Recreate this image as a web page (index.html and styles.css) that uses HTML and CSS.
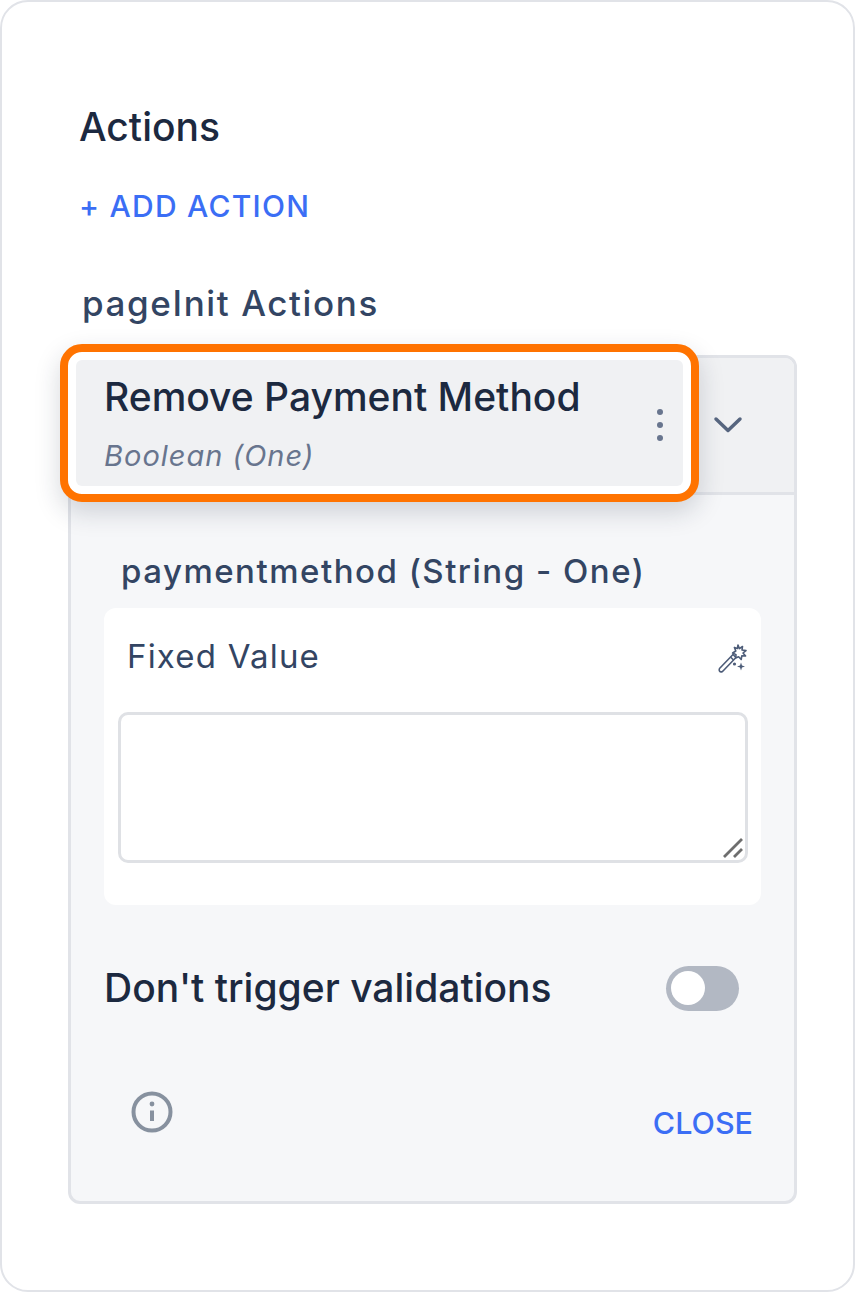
FILE: index.html
```html
<!doctype html>
<html lang="en">

<head>
    <meta charset="utf-8">
    <meta name="viewport" content="width=device-width, initial-scale=1.0">
    <title>Actions</title>
    <link rel="stylesheet" href="styles.css">
</head>

<body>
    <div class="frame">
        <h1 class="title">Actions</h1>
        <a class="add-action">+ ADD ACTION</a>
        <h2 class="subtitle">pageInit Actions</h2>

        <div class="panel">
            <div class="panel-head">
                <div class="highlight">
                    <div class="action-card">
                        <div class="action-text">
                            <div class="action-name">Remove Payment Method</div>
                            <div class="action-type">Boolean (One)</div>
                        </div>
                        <svg class="dots" width="8" height="36" viewBox="0 0 8 36">
                            <circle cx="4" cy="5" r="3" />
                            <circle cx="4" cy="18" r="3" />
                            <circle cx="4" cy="31" r="3" />
                        </svg>
                    </div>
                </div>
                <svg class="chevron" width="30" height="18" viewBox="0 0 30 18">
                    <path d="M3 3 L15 14.5 L27 3" />
                </svg>
            </div>

            <div class="panel-body">
                <div class="param-label">paymentmethod (String - One)</div>
                <div class="value-card">
                    <div class="value-head">
                        <span class="value-label">Fixed Value</span>
                        <svg class="wand" width="32" height="32" viewBox="0 0 32 32">
                            <path d="M2.5 26.5 L16 12.5 L19 15.5 L5.5 29.5 Q3.5 30.5 2.5 29 Q1.8 28 2.5 26.5 Z" />
                            <path d="M13.5 15 L16.5 18" />
                            <path d="M21 3 L22.4 6.6 L25.5 4.5 L25 8 L29 8.6 L26 11 L28.6 14 L24.8 13.8 L24.2 17.5 L21.6 14.8 L18.6 16 L19 12.6 L15.6 11 L18.8 9 L17.4 5.4 L20.4 6.4 Z" />
                            <path class="fill" d="M24 20.5 L25 23.5 L28 24.5 L25 25.5 L24 28.5 L23 25.5 L20 24.5 L23 23.5 Z" />
                            <circle class="fill" cx="17.5" cy="22" r="1.6" />
                        </svg>
                    </div>
                    <div class="textarea">
                        <svg class="grip" width="20" height="20" viewBox="0 0 20 20">
                            <path d="M1 19 L19 1 M11 19 L19 11" />
                        </svg>
                    </div>
                </div>

                <div class="toggle-row">
                    <span class="toggle-label">Don't trigger validations</span>
                    <span class="toggle"><span class="knob"></span></span>
                </div>

                <div class="panel-foot">
                    <svg class="info" width="42" height="42" viewBox="0 0 42 42">
                        <circle cx="21" cy="21" r="18.5" />
                        <path d="M21 19.5 V30" />
                        <circle class="dot" cx="21" cy="13" r="2.4" />
                    </svg>
                    <a class="close">CLOSE</a>
                </div>
            </div>
        </div>
    </div>
</body>

</html>
```

FILE: styles.css
```css
html, body {
    margin: 0;
    padding: 0;
    background: #ffffff;
    font-family: 'Inter', 'Liberation Sans', sans-serif;
}

.frame {
    box-sizing: border-box;
    width: 855px;
    height: 1292px;
    padding: 103px 56px 0 66px;
    background: #ffffff;
    border: 2px solid #e1e3e8;
    border-radius: 28px;
}

.title {
    margin: 0;
    padding-left: 11px;
    font-size: 39px;
    line-height: 44px;
    font-weight: 500;
    color: #1c2940;
}

.add-action {
    display: block;
    margin-top: 39px;
    padding-left: 11px;
    font-size: 30px;
    line-height: 36px;
    font-weight: 500;
    letter-spacing: 1.25px;
    color: #3b6ef5;
}

.subtitle {
    margin: 0;
    margin-top: 59px;
    padding-left: 14px;
    font-size: 35px;
    line-height: 40px;
    font-weight: 500;
    letter-spacing: 1.6px;
    color: #334563;
}

.panel {
    margin-top: 32px;
    width: 729px;
    height: 849px;
    box-sizing: border-box;
    background: #f6f7f9;
    border: 3px solid #e1e3e8;
    border-radius: 12px;
}

.panel-head {
    display: flex;
    align-items: center;
    height: 134px;
    background: #f0f1f3;
    border-bottom: 3px solid #e1e3e8;
    border-radius: 9px 9px 0 0;
}

.highlight {
    box-sizing: border-box;
    width: 639px;
    height: 158px;
    margin: -14px 0 0 -11px;
    align-self: flex-start;
    flex: none;
    padding: 8px;
    background: #ffffff;
    border: 8px solid #ff7300;
    border-radius: 22px;
    box-shadow: 0 10px 26px rgba(30, 40, 60, 0.18);
}

.action-card {
    box-sizing: border-box;
    height: 100%;
    display: flex;
    align-items: center;
    padding: 0 19px 0 28px;
    background: #f0f1f3;
    border-radius: 6px;
}

.action-text {
    flex: 1;
    padding-top: 3px;
}

.action-name {
    font-size: 39px;
    line-height: 44px;
    font-weight: 500;
    color: #1c2940;
    white-space: nowrap;
}

.action-type {
    margin-top: 19px;
    font-size: 29px;
    line-height: 36px;
    font-style: italic;
    letter-spacing: 1px;
    color: #68758e;
}

.dots {
    margin-top: 4px;
    fill: #68758e;
}

.chevron {
    margin-left: 14px;
    fill: none;
    stroke: #56657f;
    stroke-width: 3.5;
    stroke-linecap: round;
    stroke-linejoin: round;
}

.panel-body {
    padding: 56px 33px 0 33px;
}

.param-label {
    padding-left: 17px;
    font-size: 33px;
    line-height: 40px;
    font-weight: 500;
    letter-spacing: 1.5px;
    color: #334563;
}

.value-card {
    box-sizing: border-box;
    height: 297px;
    margin-top: 17px;
    padding: 24px 13px 0 14px;
    background: #ffffff;
    border-radius: 12px;
}

.value-head {
    display: flex;
    justify-content: space-between;
    align-items: center;
    padding-left: 9px;
    height: 48px;
}

.value-label {
    font-size: 33px;
    line-height: 40px;
    letter-spacing: 1.2px;
    color: #334563;
}

.wand {
    margin: 4px -1px 0 0;
    fill: none;
    stroke: #4d5c78;
    stroke-width: 1.6;
    stroke-linejoin: round;
}

.wand .fill {
    fill: #4d5c78;
    stroke: none;
}

.textarea {
    display: flex;
    justify-content: flex-end;
    align-items: flex-end;
    box-sizing: border-box;
    height: 151px;
    margin-top: 32px;
    padding: 0 2px 2px 0;
    background: #ffffff;
    border: 3px solid #dfe1e5;
    border-radius: 10px;
}

.grip {
    fill: none;
    stroke: #6e6e6e;
    stroke-width: 2.8;
}

.toggle-row {
    display: flex;
    justify-content: space-between;
    align-items: center;
    margin-top: 58px;
    padding: 0 22px 0 0;
}

.toggle-label {
    font-size: 39px;
    line-height: 50px;
    font-weight: 500;
    color: #1c2940;
}

.toggle {
    display: flex;
    align-items: center;
    box-sizing: border-box;
    width: 73px;
    height: 45px;
    padding: 0 5px;
    background: #b2b8c3;
    border-radius: 23px;
}

.knob {
    width: 34px;
    height: 34px;
    background: #ffffff;
    border-radius: 50%;
}

.panel-foot {
    display: flex;
    justify-content: space-between;
    margin-top: 78px;
    padding: 0 8px 0 27px;
}

.info {
    fill: none;
    stroke: #87919f;
    stroke-width: 4;
}

.info .dot {
    fill: #87919f;
    stroke: none;
}

.close {
    margin-top: 14px;
    font-size: 30.5px;
    line-height: 36px;
    font-weight: 500;
    color: #3b6ef5;
}
```
